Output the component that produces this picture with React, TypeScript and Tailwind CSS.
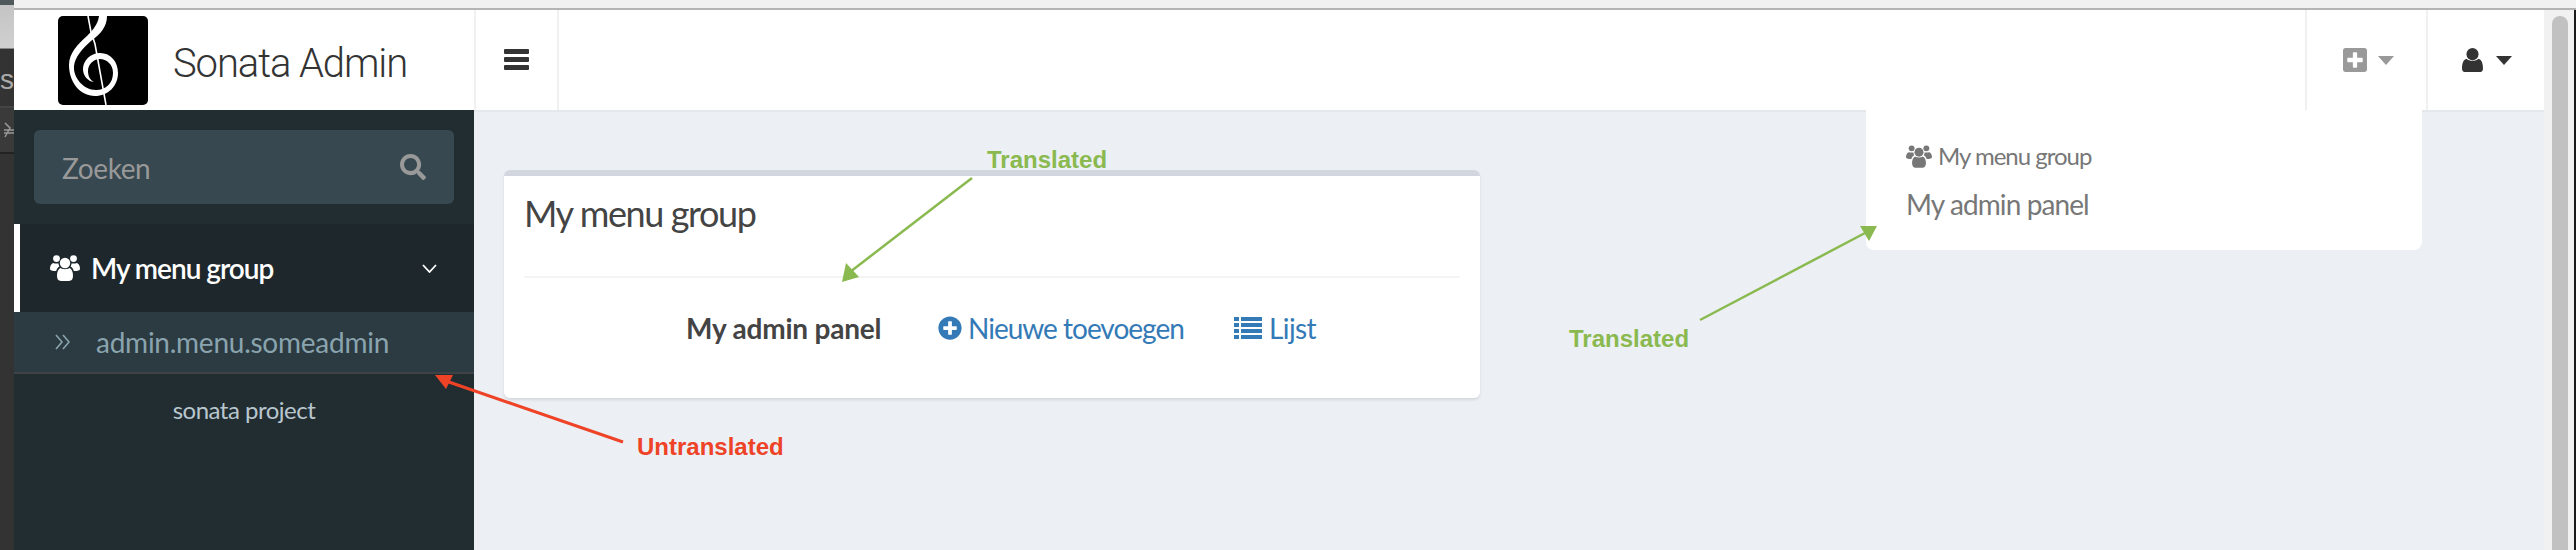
import { FaPlusCircle, FaPlusSquare, FaSearch } from "react-icons/fa";

const font = { sans: "font-['Lato','Noto_Sans',sans-serif]" };

const UsersIcon = ({ className }: { className: string }) => (
  <svg viewBox="0 0 30 26" className={className} fill="currentColor">
    <circle cx="15" cy="8" r="5.2" />
    <circle cx="6.5" cy="3.6" r="3.4" />
    <circle cx="23.5" cy="3.6" r="3.4" />
    <path d="M3 8 C1 9 0 11 0 14 C0 15.5 2 16 6.2 16 C6.8 14 7.8 12.6 9.4 11.6 C8.8 10.4 8.5 9.4 8.5 8.4 C6.5 8.6 5 8.6 3 8 Z" />
    <path d="M27 8 C29 9 30 11 30 14 C30 15.5 28 16 23.8 16 C23.2 14 22.2 12.6 20.6 11.6 C21.2 10.4 21.5 9.4 21.5 8.4 C23.5 8.6 25 8.6 27 8 Z" />
    <path d="M10.5 13 C13 14.6 17 14.6 19.5 13 C21.6 14 23 16.6 23 20.6 C23 24.4 21.4 26 19 26 H11 C8.6 26 7 24.4 7 20.6 C7 16.6 8.4 14 10.5 13 Z" />
  </svg>
);

const UserIcon = ({ className }: { className: string }) => (
  <svg viewBox="0 0 21 24" className={className} fill="currentColor">
    <ellipse cx="10.5" cy="6.2" rx="6" ry="6.2" />
    <path d="M4.6 10.8 C7 13.6 14 13.6 16.4 10.8 C19.4 11.6 21 15 21 20.4 C21 23 19.6 24 17.6 24 H3.4 C1.4 24 0 23 0 20.4 C0 15 1.6 11.6 4.6 10.8 Z" />
  </svg>
);

const ListIcon = ({ className }: { className: string }) => (
  <svg viewBox="0 0 28 22" className={className} fill="currentColor">
    <rect x="0" y="0" width="5" height="4" />
    <rect x="7" y="0" width="21" height="4" />
    <rect x="0" y="6" width="5" height="4" />
    <rect x="7" y="6" width="21" height="4" />
    <rect x="0" y="12" width="5" height="4" />
    <rect x="7" y="12" width="21" height="4" />
    <rect x="0" y="18" width="5" height="4" />
    <rect x="7" y="18" width="21" height="4" />
  </svg>
);

const Caret = ({ className }: { className: string }) => (
  <svg viewBox="0 0 16 9" className={className} fill="currentColor">
    <path d="M0 0 H16 L8 9 Z" />
  </svg>
);

const Logo = () => (
  <svg viewBox="0 0 90 89" className="h-[89px] w-[90px]">
    <rect width="90" height="89" rx="5" fill="#000" />
    <path
      fill="#fff"
      d="M41 0 H49 C49 10 43 18 33 25 C24 33 17 41 16 50 C15 61 25 74 38 74 C48 74 55 67 55 57 C55 48 48 43 42 43 C35 43 30 49 30 55 C30 60 32 64 36 66 C29 65 25 59 25 53 C25 45 32 37 42 37 C53 37 60 46 60 57 C60 70 50 80 37 80 C22 80 11 66 11 49 C11 37 20 28 29 20 C35 14 40 8 41 0 Z"
    />
    <path d="M30 0 L33 16 L37 28 L48 89" stroke="#fff" strokeWidth="1.6" fill="none" />
  </svg>
);

const LeftStrip = () => (
  <div className="flex h-full w-[14px] shrink-0 flex-col overflow-hidden bg-[#333333]">
    <div className="h-[5px] bg-[#4f585b]" />
    <div className="h-[44px] border-b border-[#888888] bg-gradient-to-b from-[#c4c4c4] to-[#d0d0d0]" />
    <div className="flex h-[59px] items-center justify-end border-b-2 border-[#444444] bg-[#333333] pt-[4px]">
      <span className="font-['Liberation_Sans',sans-serif] text-[28px] leading-none text-[#aaaaaa]">ns</span>
    </div>
    <div className="flex h-[46px] items-center justify-end border-b-2 border-[#222222] bg-[#3a3a3a] text-[#999999]">
      <svg viewBox="0 0 10 18" className="h-[18px] w-[10px]" stroke="currentColor" fill="none" strokeWidth="1.5">
        <path d="M0 9 H10 M0 12 H10 M1 2 L6 7 L1 16" />
      </svg>
    </div>
    <div className="flex-1 bg-[#333333]" />
  </div>
);

const Header = () => (
  <header className="flex h-[100px] shrink-0 bg-white">
    <div className="flex w-[460px] shrink-0 items-center pl-[44px]">
      <Logo />
      <span className="ml-[25px] mt-[8px] font-['Roboto',sans-serif] text-[40px] font-light leading-none tracking-[-1.1px] text-[#333333]">
        Sonata Admin
      </span>
    </div>
    <div className="flex w-[85px] items-center justify-center border-x-2 border-[#f0f0f0] pb-[2px]">
      <div className="flex h-[21px] w-[25px] flex-col justify-between">
        <span className="h-[5px] rounded-[1px] bg-[#333333]" />
        <span className="h-[5px] rounded-[1px] bg-[#333333]" />
        <span className="h-[5px] rounded-[1px] bg-[#333333]" />
      </div>
    </div>
    <div className="flex-1" />
    <div className="flex w-[121px] items-center justify-center gap-[11px] border-l-2 border-[#f0f0f0] pl-[4px] text-[#999999]">
      <FaPlusSquare className="h-[28px] w-[24px]" />
      <Caret className="h-[9px] w-[16px]" />
    </div>
    <div className="flex w-[118px] items-center justify-center gap-[13px] border-l-2 border-[#f0f0f0] pl-[2px] text-[#333333]">
      <UserIcon className="h-[24px] w-[21px]" />
      <Caret className="h-[9px] w-[16px]" />
    </div>
  </header>
);

const Sidebar = () => (
  <aside className={`flex h-full w-[460px] shrink-0 flex-col bg-[#222d32] ${font.sans}`}>
    <div className="px-[20px] pt-[20px]">
      <div className="flex h-[74px] items-center justify-between rounded-[6px] bg-[#374850] pl-[28px] pr-[28px]">
        <span className="pt-[2px] text-[28px] tracking-[-0.4px] text-[#999999]">Zoeken</span>
        <FaSearch className="h-[26px] w-[26px] text-[#999999]" />
      </div>
    </div>
    <div className="mt-[20px] flex h-[88px] items-center border-l-[6px] border-white bg-[#1e282c] pl-[30px] pr-[37px] text-white">
      <UsersIcon className="h-[28px] w-[30px]" />
      <span className="ml-[11px] text-[28px] font-semibold tracking-[-1px]">My menu group</span>
      <svg viewBox="0 0 15 9" className="ml-auto h-[9px] w-[15px]" fill="none" stroke="currentColor" strokeWidth="1.8">
        <path d="M1 1 L7.5 8 L14 1" />
      </svg>
    </div>
    <div className="flex h-[62px] items-center border-b-2 border-[#3d4245] bg-[#2c3b41] pl-[41px] text-[#8aa4af]">
      <svg viewBox="0 0 16 16" className="h-[16px] w-[16px]" fill="none" stroke="currentColor" strokeWidth="1.6">
        <path d="M1 1 L7 8 L1 15 M8 1 L14 8 L8 15" />
      </svg>
      <span className="ml-[25px] text-[28px] tracking-[-0.25px]">admin.menu.someadmin</span>
    </div>
    <div className="mt-[16px] text-center text-[24px] leading-[40px] tracking-[-0.5px] text-[#b8c7ce]">sonata project</div>
  </aside>
);

const Card = () => (
  <section className={`h-[228px] w-[976px] rounded-[6px] border-t-[6px] border-[#d2d6de] bg-white px-[20px] shadow-[0_2px_3px_rgba(0,0,0,0.1)] ${font.sans}`}>
    <h3 className="flex h-[100px] items-center pb-[26px] text-[36px] tracking-[-1.4px] text-[#444444]">My menu group</h3>
    <div className="h-[2px] bg-[#f4f4f4]" />
    <div className="flex h-[90px] items-center pb-[20px] pt-[30px] text-[28px]">
      <span className="ml-[162px] w-[252px] font-bold tracking-[-0.2px] text-[#444444]">My admin panel</span>
      <FaPlusCircle className="h-[24px] w-[24px] text-[#337ab7]" />
      <span className="ml-[6px] w-[266px] tracking-[-1px] text-[#337ab7]">Nieuwe toevoegen</span>
      <ListIcon className="h-[22px] w-[28px] text-[#337ab7]" />
      <span className="ml-[7px] tracking-[-0.6px] text-[#337ab7]">Lijst</span>
    </div>
  </section>
);

const Dropdown = () => (
  <div className={`absolute left-[1852px] top-[100px] h-[140px] w-[556px] rounded-b-[8px] bg-white pl-[40px] pt-[29px] text-[#777777] ${font.sans}`}>
    <div className="flex items-center text-[24px] leading-[34px]">
      <UsersIcon className="h-[25px] w-[26px]" />
      <span className="ml-[6px] tracking-[-1px]">My menu group</span>
    </div>
    <div className="mt-[11px] text-[28px] leading-[40px] tracking-[-0.9px]">My admin panel</div>
  </div>
);

const Scrollbar = () => (
  <div className="flex w-[32px] shrink-0">
    <div className="w-[30px] bg-[#f1f1f1] pl-[8px] pt-[6px]">
      <div className="h-full w-[16px] rounded-t-[8px] bg-[#c1c1c1]" />
    </div>
    <div className="flex-1 bg-[#1a1a1a]" />
  </div>
);

const Annotations = () => (
  <>
    <svg viewBox="0 0 2576 550" className="pointer-events-none absolute left-0 top-0 h-[550px] w-[2576px]">
      <path d="M972 178 L850 272" stroke="#8ab94f" strokeWidth="2.5" />
      <path d="M842 282 L846 263 L859 277 Z" fill="#8ab94f" />
      <path d="M1700 320 L1865 233" stroke="#8ab94f" strokeWidth="2.5" />
      <path d="M1877 226 L1860 226 L1869 241 Z" fill="#8ab94f" />
      <path d="M623 442 L446 381" stroke="#ee4326" strokeWidth="3" />
      <path d="M435 375 L453 375 L446 389 Z" fill="#ee4326" />
    </svg>
    <span className="absolute left-[987px] top-[146px] font-['Liberation_Sans',sans-serif] text-[24px] font-bold leading-[28px] text-[#8ab94f]">
      Translated
    </span>
    <span className="absolute left-[1569px] top-[325px] font-['Liberation_Sans',sans-serif] text-[24px] font-bold leading-[28px] text-[#8ab94f]">
      Translated
    </span>
    <span className="absolute left-[637px] top-[433px] font-['Liberation_Sans',sans-serif] text-[24px] font-bold leading-[28px] text-[#ee4326]">
      Untranslated
    </span>
  </>
);

const App = () => (
  <div className="relative flex h-[550px] w-[2576px] overflow-hidden bg-white">
    <LeftStrip />
    <div className="flex min-w-0 flex-1 flex-col">
      <div className="h-[10px] shrink-0 border-b-2 border-[#b4b4b4] bg-[#f1f1f1]" />
      <div className="flex min-h-0 flex-1">
        <div className="relative flex min-w-0 flex-1 flex-col">
          <Header />
          <div className="flex min-h-0 flex-1">
            <Sidebar />
            <main className="flex-1 border-t-2 border-[#e4e7ec] bg-[#ecf0f5] pl-[30px] pt-[58px]">
              <Card />
            </main>
          </div>
          <Dropdown />
        </div>
        <Scrollbar />
      </div>
    </div>
    <Annotations />
  </div>
);

export default App;
